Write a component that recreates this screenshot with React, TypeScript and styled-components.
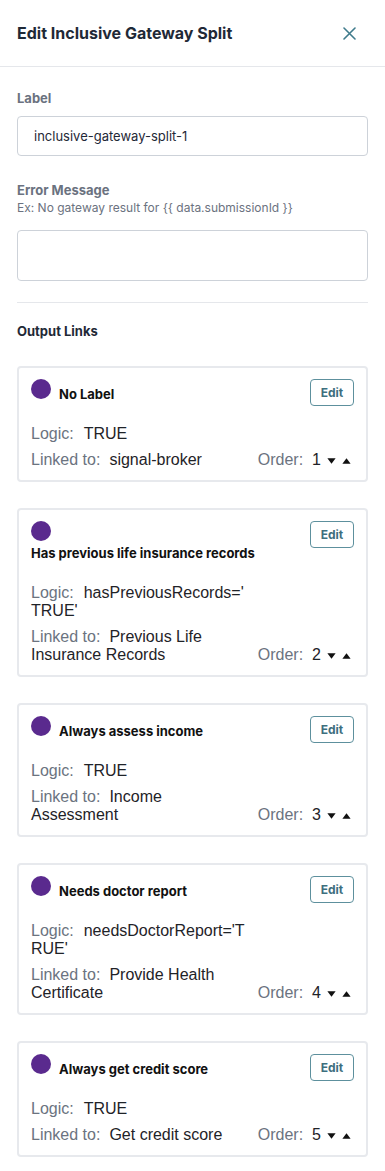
import React from "react";
import styled, { createGlobalStyle } from "styled-components";

const GlobalStyle = createGlobalStyle`
  html, body { margin: 0; padding: 0; background: #ffffff; }
  body { font-family: Inter, "Noto Sans", sans-serif; -webkit-font-smoothing: antialiased; }
  * { box-sizing: border-box; }
`;

const Panel = styled.div`
  width: 385px;
  background: #ffffff;
`;

const Header = styled.header`
  height: 67px;
  display: flex;
  align-items: center;
  justify-content: space-between;
  padding: 0 24px 0 17px;
  border-bottom: 1px solid #e5e7eb;
`;

const Title = styled.h1`
  margin: 0;
  font-family: Inter, sans-serif;
  font-size: 16px;
  font-weight: 700;
  color: #1f2937;
  line-height: 20px;
`;

const CloseButton = styled.button`
  width: 24px;
  height: 24px;
  padding: 0;
  border: none;
  background: none;
  display: flex;
  align-items: center;
  justify-content: center;
  color: #3f7b8c;
  cursor: pointer;
`;

const Body = styled.div`
  padding: 23px 17px 20px;
  display: flex;
  flex-direction: column;
`;

const Field = styled.div<{ $gap?: number }>`
  display: flex;
  flex-direction: column;
  margin-bottom: ${(p) => p.$gap ?? 0}px;
`;

const FieldLabel = styled.label`
  font-family: Inter, sans-serif;
  font-size: 13px;
  font-weight: 700;
  line-height: 16px;
  color: #6b7280;
`;

const Hint = styled.div`
  font-family: Inter, sans-serif;
  font-size: 12px;
  line-height: 16px;
  color: #6b7280;
  margin-top: 2px;
`;

const TextInput = styled.input`
  margin-top: 10px;
  height: 40px;
  width: 100%;
  border: 1px solid #cdd2d9;
  border-radius: 4px;
  padding: 0 16px;
  font-family: Inter, sans-serif;
  font-size: 13px;
  color: #1f2937;
  outline: none;
`;

const TextArea = styled.textarea`
  margin-top: 14px;
  height: 51px;
  width: 100%;
  border: 1px solid #cdd2d9;
  border-radius: 4px;
  padding: 8px 16px;
  font-family: Inter, sans-serif;
  font-size: 13px;
  resize: none;
  outline: none;
  display: block;
`;

const Divider = styled.hr`
  border: none;
  border-top: 1px solid #e5e7eb;
  margin: 21px 0 20px;
  width: 100%;
`;

const SectionTitle = styled.h2`
  margin: 0 0 27px;
  font-family: Inter, sans-serif;
  font-size: 13px;
  font-weight: 700;
  line-height: 16px;
  color: #1f2937;
`;

const CardList = styled.div`
  display: flex;
  flex-direction: column;
  gap: 26px;
`;

const Card = styled.div`
  border: 2px solid #e7e9ed;
  border-radius: 4px;
  padding: 11px 12px 11px 12px;
`;

const CardHeader = styled.div`
  display: flex;
  justify-content: space-between;
  align-items: flex-start;
`;

const TitleGroup = styled.div`
  width: 232px;
  display: flex;
  flex-wrap: wrap;
  align-items: baseline;
  column-gap: 8px;
`;

const Dot = styled.div`
  width: 20px;
  height: 20px;
  border-radius: 50%;
  background: #5a2a8e;
  flex: none;
`;

const LinkTitle = styled.div`
  font-family: Inter, sans-serif;
  font-size: 13px;
  font-weight: 700;
  line-height: 24px;
  color: #111111;
  white-space: nowrap;
`;

const EditButton = styled.button`
  width: 44px;
  height: 27px;
  border: 1px solid #5d909d;
  border-radius: 4px;
  background: #ffffff;
  color: #3d6f7e;
  font-family: Inter, sans-serif;
  font-size: 12px;
  font-weight: 700;
  padding: 0;
  cursor: pointer;
`;

const Details = styled.div`
  margin-top: 19px;
  display: grid;
  grid-template-columns: 220px 1fr;
  row-gap: 8px;
  font-family: "Liberation Sans", Arial, sans-serif;
  font-size: 16px;
  line-height: 18px;
  color: #1f2328;
`;

const LogicLine = styled.div`
  grid-column: 1;
  line-break: anywhere;
`;

const LinkedLine = styled.div`
  grid-column: 1;
`;

const Key = styled.span<{ $gap?: number }>`
  color: #6b7380;
  margin-right: ${(p) => p.$gap ?? 9}px;
  line-break: auto;
`;

const OrderGroup = styled.div`
  grid-column: 2;
  justify-self: end;
  align-self: end;
  display: flex;
  align-items: center;
  white-space: nowrap;
`;

const OrderValue = styled.span`
  margin-right: 3px;
`;

const ArrowButton = styled.button`
  width: 15px;
  height: 14px;
  padding: 0;
  border: none;
  background: none;
  display: flex;
  align-items: center;
  justify-content: center;
  color: #111111;
  cursor: pointer;
  margin-top: 1px;
`;

const Triangle = ({ up }: { up?: boolean }) => (
  <svg width="9" height="6" viewBox="0 0 9 6" aria-hidden>
    {up ? <path d="M4.5 0.3 L8.6 5.7 L0.4 5.7 Z" fill="currentColor" /> : <path d="M0.4 0.3 L8.6 0.3 L4.5 5.7 Z" fill="currentColor" />}
  </svg>
);

type Link = { title: string; logic: string; linked: string; order: number };

const links: Link[] = [
  { title: "No Label", logic: "TRUE", linked: "signal-broker", order: 1 },
  { title: "Has previous life insurance records", logic: "hasPreviousRecords='TRUE'", linked: "Previous Life Insurance Records", order: 2 },
  { title: "Always assess income", logic: "TRUE", linked: "Income Assessment", order: 3 },
  { title: "Needs doctor report", logic: "needsDoctorReport='TRUE'", linked: "Provide Health Certificate", order: 4 },
  { title: "Always get credit score", logic: "TRUE", linked: "Get credit score", order: 5 },
];

const LinkCard = ({ link }: { link: Link }) => (
  <Card>
    <CardHeader>
      <TitleGroup>
        <Dot />
        <LinkTitle>{link.title}</LinkTitle>
      </TitleGroup>
      <EditButton>Edit</EditButton>
    </CardHeader>
    <Details>
      <LogicLine>
        <Key $gap={10}>Logic:</Key>
        {link.logic}
      </LogicLine>
      <LinkedLine>
        <Key>Linked to:</Key>
        {link.linked}
      </LinkedLine>
      <OrderGroup>
        <Key>Order:</Key>
        <OrderValue>{link.order}</OrderValue>
        <ArrowButton aria-label="Move down">
          <Triangle />
        </ArrowButton>
        <ArrowButton aria-label="Move up">
          <Triangle up />
        </ArrowButton>
      </OrderGroup>
    </Details>
  </Card>
);

export default function App() {
  return (
    <>
      <GlobalStyle />
      <Panel>
        <Header>
          <Title>Edit Inclusive Gateway Split</Title>
          <CloseButton aria-label="Close">
            <svg width="13" height="13" viewBox="0 0 13 13" aria-hidden>
              <path d="M1 1 L12 12 M12 1 L1 12" stroke="currentColor" strokeWidth="1.6" strokeLinecap="round" />
            </svg>
          </CloseButton>
        </Header>
        <Body>
          <Field $gap={26}>
            <FieldLabel>Label</FieldLabel>
            <TextInput defaultValue="inclusive-gateway-split-1" />
          </Field>
          <Field>
            <FieldLabel>Error Message</FieldLabel>
            <Hint>Ex: No gateway result for {"{{ data.submissionId }}"}</Hint>
            <TextArea />
          </Field>
          <Divider />
          <SectionTitle>Output Links</SectionTitle>
          <CardList>
            {links.map((l) => (
              <LinkCard key={l.order} link={l} />
            ))}
          </CardList>
        </Body>
      </Panel>
    </>
  );
}
